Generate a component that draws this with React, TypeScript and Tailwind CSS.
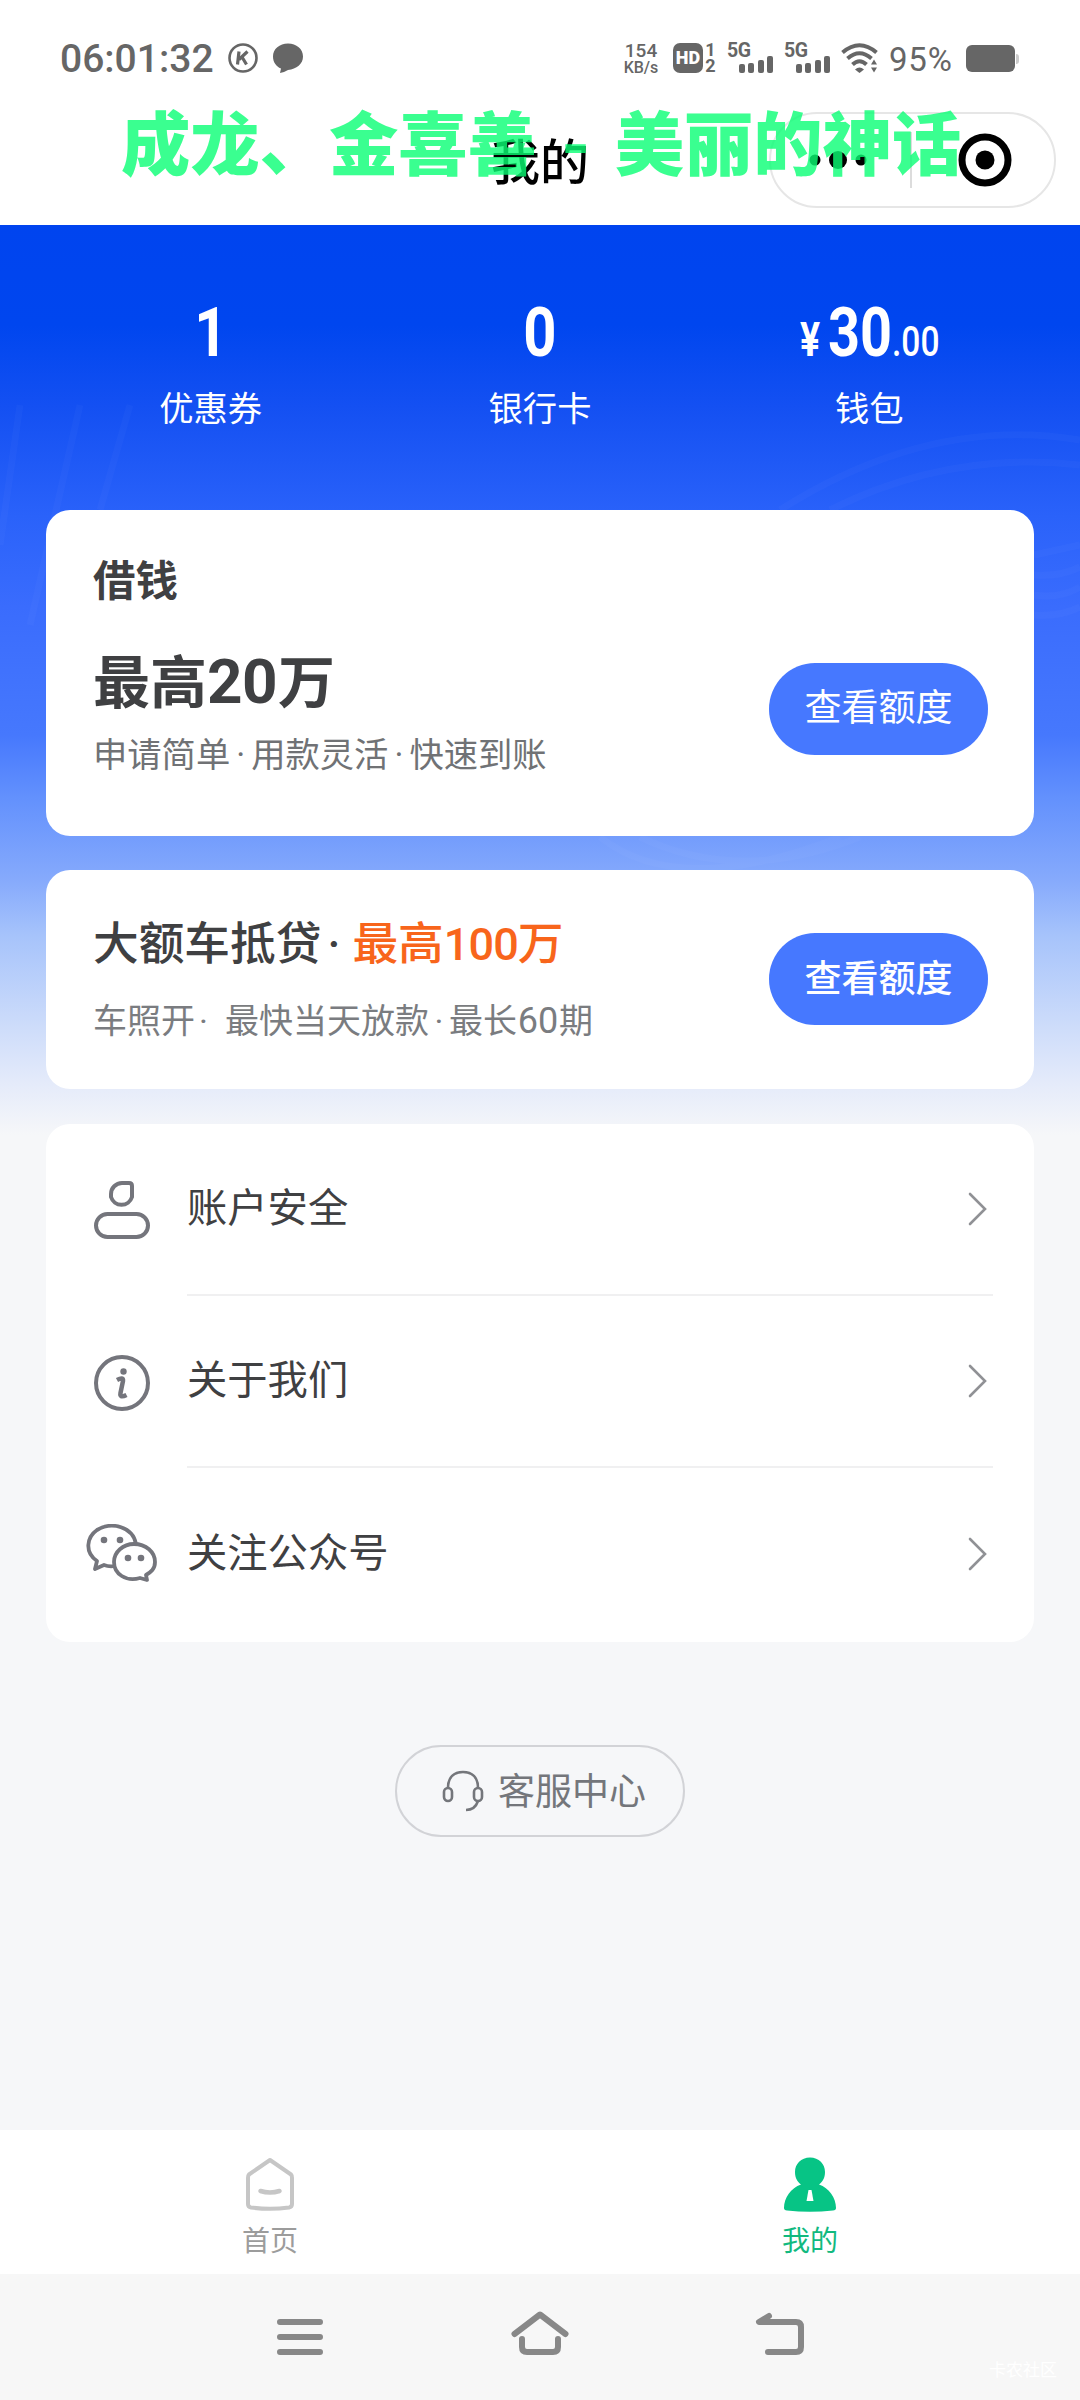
import type { ReactNode } from "react";

const SANS = "font-['Roboto','Noto_Sans_CJK_SC',sans-serif]";

function StatusBar() {
  return (
    <div className="flex h-[116px] w-full pt-[40px] text-[#666]">
      <div className="flex h-[36px] w-[560px] items-center pl-[60px]">
        <span className="w-[167px] whitespace-nowrap pt-[2px] text-[39px] font-medium leading-[36px]">06:01:32</span>
        <svg className="h-[32px] w-[32px]" viewBox="0 0 32 32" fill="none" stroke="currentColor">
          <circle cx="16" cy="16" r="13.5" strokeWidth="2.6" />
          <path d="M12 9.5L10.500 22.500M20.500 9.500L12 17.500M15 15L19.500 22.500" strokeWidth="3.200" />
        </svg>
        <svg className="ml-[13px] h-[32px] w-[32px]" viewBox="0 0 32 32" fill="currentColor">
          <path d="M16 1.500C24.500 1.500 31 7 31 14.500S24.500 27 16 28Q12 30.500 8 31L9 26.500C4 24.500 1 20 1 14.500C1 7 7.500 1.500 16 1.500Z" />
        </svg>
      </div>
      <div className="flex h-[36px] items-center pl-[62px]">
        <div className="flex w-[38px] flex-col items-center pt-px font-medium">
          <span className="text-[19px] leading-[17px]">154</span>
          <span className="whitespace-nowrap text-[16px] leading-[17px]">KB/s</span>
        </div>
        <div className="ml-[13px] flex h-[30px] w-[30px] items-center justify-center rounded-[7px] bg-[#666] text-[18px] font-black leading-none text-white">HD</div>
        <div className="ml-[2px] flex w-[11px] flex-col items-center text-[18px] font-bold leading-[16px]">
          <span>1</span>
          <span>2</span>
        </div>
        <Signal />
        <Signal />
        <svg className="ml-[11px] h-[30px] w-[38px]" viewBox="0 0 38 30" fill="none" stroke="currentColor" strokeWidth="4">
          <path d="M1.500 9.500Q18.500 -5 35.500 9.500" />
          <path d="M6.500 15.500Q18.500 5 30.500 15.500" />
          <path d="M11.500 21.500Q18.500 15 25.500 21.500" />
          <path d="M14 26.500Q18.500 22.500 23 26.500L18.500 30Z" fill="currentColor" stroke="none" />
          <path d="M30 21.500L33 16.500L36 21.500ZM30 24.500L33 29.500L36 24.500Z" fill="currentColor" stroke="none" />
        </svg>
        <span className="ml-[10px] w-[68px] whitespace-nowrap pt-[3px] text-[33px] leading-[33px] tracking-[0.800px]">95%</span>
        <div className="ml-[9px] mt-[1px] h-[27px] w-[49px] rounded-[6px] bg-[#666]" />
        <div className="ml-[1px] mt-[1px] h-[10px] w-[3px] rounded-r bg-[#ccc]" />
      </div>
    </div>
  );
}

function Signal() {
  return (
    <div className="ml-[11px] flex h-[30px] w-[46px] flex-col">
      <span className="h-[14px] pt-px text-[19.500px] font-bold leading-[14px] tracking-[-0.500px]">5G</span>
      <div className="-mt-px flex h-[17px] items-end gap-[3.500px] self-end">
        <i className="h-[9px] w-[6px] rounded-[2px] bg-[#666]" />
        <i className="h-[10px] w-[6px] rounded-[2px] bg-[#666]" />
        <i className="h-[13px] w-[6px] rounded-[2px] bg-[#666]" />
        <i className="h-[17px] w-[6px] rounded-[2px] bg-[#666]" />
      </div>
    </div>
  );
}

function Stat({ value, label }: { value: ReactNode; label: string }) {
  return (
    <div className="flex flex-1 flex-col items-center text-white">
      <div className="flex h-[70px] items-baseline text-[69px] font-bold leading-[70px]">{value}</div>
      <div className="mt-[21px] text-[34.300px] leading-[40px]">{label}</div>
    </div>
  );
}

function Row({ icon, label, last }: { icon: ReactNode; label: string; last?: boolean }) {
  return (
    <div className="flex h-[172px] items-center">
      <div className="flex w-[141px] shrink-0 justify-center pl-[11px]">{icon}</div>
      <div className={last ? "flex h-full w-[806px] items-center justify-between pr-[6px]" : "flex h-full w-[806px] items-center justify-between border-b-2 border-[#f0f0f1] pr-[6px]"}>
        <span className="text-[40.300px] leading-[48px] text-[#3f4042]">{label}</span>
        <svg className="h-[34px] w-[20px]" viewBox="0 0 20 34" fill="none" stroke="#909195" strokeWidth="2.600" strokeLinecap="round">
          <path d="M3 2L18 17L3 32" />
        </svg>
      </div>
    </div>
  );
}

export default function App() {
  return (
    <div className={`relative flex h-[2400px] w-[1080px] flex-col overflow-hidden bg-[#f6f7f9] ${SANS}`}>
      <header className="relative h-[225px] w-full bg-white">
        <StatusBar />
        <div className="flex h-[96px] items-center justify-center text-[49px] font-medium leading-[96px] text-black">我的</div>
        <div className="absolute left-[769px] top-[112px] flex h-[96px] w-[287px] items-center rounded-full border-2 border-[#e6e6e6]">
          <svg className="ml-[38px] h-[20px] w-[60px]" viewBox="0 0 60 20">
            <circle cx="6" cy="10" r="5.500" />
            <circle cx="29" cy="10" r="9" />
            <circle cx="52" cy="10" r="5.500" />
          </svg>
          <i className="ml-[41px] h-[56px] w-[2px] bg-[#dcdcdc]" />
          <svg className="ml-[46px] h-[54px] w-[54px]" viewBox="0 0 54 54">
            <circle cx="27" cy="27" r="23" fill="none" stroke="#000" strokeWidth="7" />
            <circle cx="27" cy="27" r="9.500" />
          </svg>
        </div>
        <div className="absolute left-[121px] top-[97px] flex whitespace-nowrap text-[69.300px] font-black leading-[100px] text-[#0aff75] opacity-80">
          <span>成龙、金喜善</span>
          <span className="w-[78px] text-center">-</span>
          <span>美丽的神话</span>
        </div>
      </header>

      <main className="relative h-[1905px] w-full px-[46px]">
        <div className="absolute left-0 top-0 h-[910px] w-full bg-[linear-gradient(180deg,#0044ef_0%,#0046ef_11%,#1450f2_20%,#2a62fa_32%,#3a6cfd_42%,#4678fd_56%,#6391fd_63%,#86aafc_72%,#a6c3fb_78%,#cddcfa_88%,#e5ebfa_94.5%,#f6f7f9_100%)]" />
        <svg className="absolute left-0 top-0 h-[910px] w-[1080px]" viewBox="0 0 1080 910" fill="none" stroke="#fff" strokeOpacity="0.025" strokeWidth="7">
          <path d="M780 285Q930 190 1080 215M830 285Q950 225 1080 240M1034 330L1080 320M1034 350Q1060 352 1080 342M1034 370Q1060 374 1080 362M1034 390Q1060 392 1080 382" />
          <path d="M600 612Q680 675 840 612M640 612Q740 660 860 612M20 180L0 320M80 180L30 400M130 180L100 285" />
        </svg>

        <div className="relative flex h-[285px] pt-[73px]">
          <Stat value={<span className="inline-block scale-x-[0.840]">1</span>} label="优惠券" />
          <Stat value={<span className="inline-block scale-x-[0.840]">0</span>} label="银行卡" />
          <Stat
            value={
              <>
                <span className="mr-[6px] inline-block w-[22px] origin-left scale-x-[0.780] text-[48px]">¥</span>
                <span className="inline-block w-[64px] origin-left scale-x-[0.810]">30</span>
                <span className="inline-block w-[46px] origin-left scale-x-[0.780] text-[43px] font-medium">.00</span>
              </>
            }
            label="钱包"
          />
        </div>

        <section className="relative flex h-[326px] w-[988px] rounded-[24px] bg-white pl-[47px] pr-[46px]">
          <div className="flex-1">
            <h2 className="mt-[47px] text-[42.500px] font-bold leading-[50px] text-[#3f4042]">借钱</h2>
            <div className="mt-[40px] flex items-baseline text-[57px] font-bold leading-[70px] text-[#3f4042]">
              <span>最高</span>
              <span className="w-[71px] text-[62px] tracking-[-0.500px]">20</span>
              <span>万</span>
            </div>
            <p className="mt-[14px] flex whitespace-nowrap text-[34.300px] leading-[44px] text-[#707275]">
              <span>申请简单</span>
              <span className="w-[21px] text-center">·</span>
              <span>用款灵活</span>
              <span className="w-[21px] text-center">·</span>
              <span>快速到账</span>
            </p>
          </div>
          <button className="mt-[153px] h-[92px] w-[219px] rounded-full bg-[#4678ff] text-[37px] leading-[92px] text-white">查看额度</button>
        </section>

        <section className="relative mt-[34px] flex h-[219px] w-[988px] rounded-[24px] bg-white pl-[47px] pr-[46px]">
          <div className="flex-1">
            <h2 className="mt-[47px] flex whitespace-nowrap text-[45.700px] font-medium leading-[56px] text-[#3f4042]">
              <span>大额车抵贷</span>
              <span className="w-[31px] pl-[6px]">·</span>
              <span className="text-[#f8651b]">最高</span>
              <span className="w-[74px] text-[45px] tracking-[-0.900px] text-[#f8651b]">100</span>
              <span className="text-[#f8651b]">万</span>
            </h2>
            <p className="mt-[26px] flex whitespace-nowrap text-[34px] leading-[44px] text-[#7a7c80]">
              <span>车照开</span>
              <span className="w-[30px] pl-[4px]">·</span>
              <span>最快当天放款</span>
              <span className="w-[20px] text-center">·</span>
              <span>最长</span>
              <span className="w-[42px] text-center text-[36px]">60</span>
              <span>期</span>
            </p>
          </div>
          <button className="mt-[63px] h-[92px] w-[219px] rounded-full bg-[#4678ff] pt-[2px] text-[37px] font-medium leading-[90px] text-white">查看额度</button>
        </section>

        <section className="relative mt-[35px] h-[518px] w-[988px] rounded-[24px] bg-white">
          <Row
            label="账户安全"
            icon={
              <svg className="h-[60px] w-[58px]" viewBox="0 0 58 60" fill="none" stroke="#74757c" strokeWidth="4">
                <path d="M29 3H36Q39 3 39 6V17A11 11 0 0 1 18 17V14A11 11 0 0 1 29 3Z" />
                <rect x="3" y="34" width="52" height="23" rx="11.500" />
              </svg>
            }
          />
          <Row
            label="关于我们"
            icon={
              <svg className="mt-[2px] h-[58px] w-[58px]" viewBox="0 0 58 58" fill="none" stroke="#74757c">
                <circle cx="29" cy="29" r="26" strokeWidth="4" />
                <circle cx="30.500" cy="17.500" r="3.200" fill="#74757c" stroke="none" />
                <path d="M24 26Q30.500 22.500 30 27L27.500 39Q26.500 44.500 33.500 41" strokeWidth="4.500" />
              </svg>
            }
          />
          <Row
            last
            label="关注公众号"
            icon={
              <svg className="-mt-[2px] h-[58px] w-[72px]" viewBox="0 0 72 58" fill="none" stroke="#74757c" strokeWidth="3.800" strokeLinejoin="round">
                <path d="M29 42Q23 43 18 41L9 45L11 37C-2 28 1 13 11 6C26 -3 47 3 50 20" />
                <path d="M48 20C60 20 69 28 69 38C69 45 65 48 60 51L61 56L54 54C40 58 28 50 28 38C28 28 37 20 48 20Z" />
                <g fill="#74757c" stroke="none">
                  <circle cx="18" cy="16" r="3.300" />
                  <circle cx="34" cy="16" r="3.300" />
                  <circle cx="42" cy="34" r="3.300" />
                  <circle cx="55" cy="34" r="3.300" />
                </g>
              </svg>
            }
          />
        </section>

        <button className="relative mx-auto mt-[103px] flex h-[92px] w-[290px] items-center rounded-full border-2 border-[#d2d3d7] pl-[45px] text-[#74767b]">
          <svg className="h-[42px] w-[42px]" viewBox="0 0 42 42" fill="none" stroke="currentColor" strokeWidth="2.600">
            <rect x="2" y="18" width="8" height="13" rx="4" />
            <rect x="32" y="18" width="8" height="13" rx="4" />
            <path d="M6 18C6 7 12 2 21 2S36 7 36 18M36 31Q33 40 24 40" />
          </svg>
          <span className="ml-[14px] mt-[4px] whitespace-nowrap text-[37px] leading-[50px]">客服中心</span>
        </button>
      </main>

      <footer className="flex h-[144px] w-full bg-white text-[28px] leading-[34px]">
        <div className="flex flex-1 flex-col items-center pt-[26px] text-[#9c9c9c]">
          <svg className="h-[57px] w-[52px]" viewBox="0 0 52 57" fill="none" stroke="#c6c6c6" strokeWidth="4" strokeLinecap="round" strokeLinejoin="round">
            <path d="M26 4L47 18.500Q48 19.500 48 22V48Q48 51 45 51.500Q26 54 7 51.500Q4 51 4 48V22Q4 19.500 5 18.500Z" />
            <path d="M16.500 35Q26 38 35.500 35" strokeWidth="4.500" />
          </svg>
          <span className="mt-[12px]">首页</span>
        </div>
        <div className="flex flex-1 flex-col items-center pt-[26px] text-[#12b97f]">
          <svg className="h-[57px] w-[54px]" viewBox="0 0 54 57">
            <path d="M27 1.500C36 1.500 42 8 42 16C42 22 39.500 26 36 28.500C46 32 53 42 53 52Q53 54 50 54.500Q27 57 4 54.500Q1 54 1 52C1 42 8 32 18 28.500C14.500 26 12 22 12 16C12 8 18 1.500 27 1.500Z" fill="#07c485" />
            <path d="M25.500 34H28.500L30.500 45H23.500Z" fill="#fff" />
          </svg>
          <span className="mt-[12px]">我的</span>
        </div>
      </footer>

      <nav className="relative flex h-[126px] w-full items-start justify-center gap-[180px] bg-[#f7f7f7] pt-[32px]">
        <svg className="h-[54px] w-[60px]" viewBox="0 0 60 54" stroke="#888" strokeWidth="6" strokeLinecap="round">
          <path d="M10 16H50M10 31H50M10 46H50" />
        </svg>
        <svg className="h-[54px] w-[60px]" viewBox="0 0 60 54" fill="none" stroke="#888" strokeWidth="6" strokeLinecap="round" strokeLinejoin="round">
          <path d="M4.500 28L30 8.500L55.500 28M12 33V41Q12 46 17 46H43Q48 46 48 41V33" />
        </svg>
        <svg className="h-[54px] w-[60px]" viewBox="0 0 60 54" fill="none" stroke="#888" strokeWidth="6" strokeLinecap="round" strokeLinejoin="round">
          <path d="M19 10L9 16H46Q51 16 51 21V41Q51 46 46 46H18" />
        </svg>
        <span className="absolute bottom-[19px] right-[23px] text-[17px] leading-[22px] text-white">卡农社区</span>
      </nav>
    </div>
  );
}
